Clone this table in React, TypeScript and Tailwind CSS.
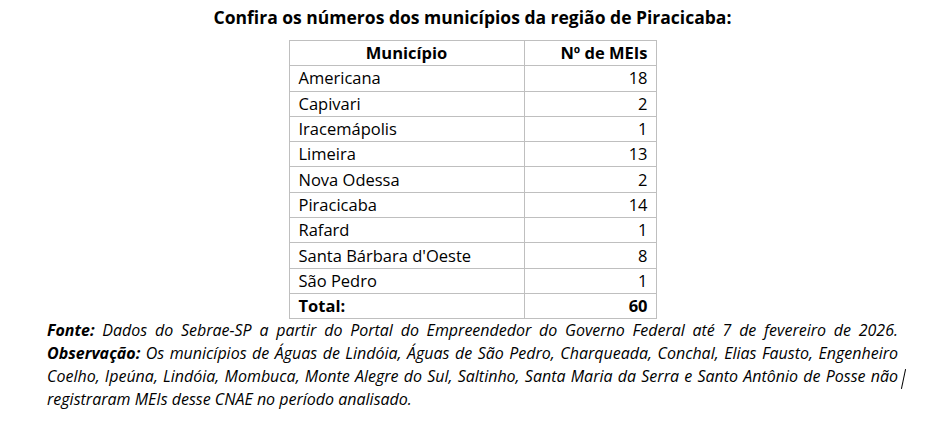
const rows: [string, number][] = [
  ['Americana', 18],
  ['Capivari', 2],
  ['Iracemápolis', 1],
  ['Limeira', 13],
  ['Nova Odessa', 2],
  ['Piracicaba', 14],
  ['Rafard', 1],
  ["Santa Bárbara d'Oeste", 8],
  ['São Pedro', 1],
];

export default function App() {
  return (
    <div className="w-[945px] h-[446px] bg-white text-black font-['Open_Sans',sans-serif]">
      {/* Title */}
      <h1 className="pt-[5px] text-center text-[17.5px] leading-[25px] font-bold">
        Confira os números dos municípios da região de Piracicaba:
      </h1>

      {/* Table */}
      <div className="flex justify-center mt-[10px]">
        <table className="border-collapse text-[16.5px]">
          <thead>
            <tr className="h-[25.3px]">
              <th className="w-[235px] border border-[#bfbfbf] px-[9px] py-0 font-bold text-center leading-[22px]">
                Município
              </th>
              <th className="w-[132px] border border-[#bfbfbf] px-[8px] py-0 font-bold text-right leading-[22px]">
                Nº de MEIs
              </th>
            </tr>
          </thead>
          <tbody>
            {rows.map(([name, count]) => (
              <tr key={name} className="h-[25.3px]">
                <td className="border border-[#bfbfbf] px-[9px] py-0 leading-[22px]">{name}</td>
                <td className="border border-[#bfbfbf] px-[8px] py-0 text-right leading-[22px]">{count}</td>
              </tr>
            ))}
            <tr className="h-[25.3px]">
              <td className="border border-[#bfbfbf] px-[9px] py-0 font-bold leading-[22px]">Total:</td>
              <td className="border border-[#bfbfbf] px-[8px] py-0 font-bold text-right leading-[22px]">60</td>
            </tr>
          </tbody>
        </table>
      </div>

      {/* Footnotes */}
      <div className="relative px-[47px] text-[16px] leading-[23px] italic text-justify">
        <p className="[text-align-last:justify]">
          <span className="font-bold">Fonte:</span> Dados do Sebrae-SP a partir do Portal do Empreendedor do Governo
          Federal até 7 de fevereiro de 2026.
        </p>
        <p>
          <span className="font-bold">Observação:</span> Os municípios de Águas de Lindóia, Águas de São Pedro,
          Charqueada, Conchal, Elias Fausto, Engenheiro Coelho, Ipeúna, Lindóia, Mombuca, Monte Alegre do Sul,
          Saltinho, Santa Maria da Serra e Santo Antônio de Posse não registraram MEIs desse CNAE no período
          analisado.
        </p>
        {/* text caret */}
        <div className="absolute left-[903px] top-[50px] h-[20px] w-px bg-black rotate-[12deg]" />
      </div>
    </div>
  );
}
